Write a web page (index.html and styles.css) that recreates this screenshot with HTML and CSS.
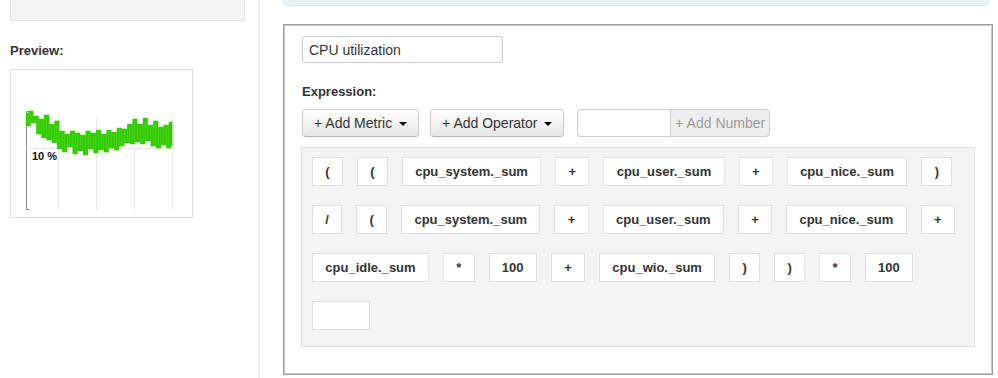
FILE: index.html
```html
<!DOCTYPE html>
<html lang="en">
<head>
    <meta charset="UTF-8">
    <meta name="viewport" content="width=device-width, initial-scale=1.0">
    <title>Composite metric</title>
    <link rel="stylesheet" href="styles.css">
</head>
<body>
    <div class="page">
        <aside class="sidebar">
            <div class="well"></div>
            <h4 class="label preview-label">Preview:</h4>
            <div class="preview">
                <svg width="181" height="147" viewBox="0 0 181 147">
                    <g stroke="#d0d0d0" stroke-width="1" stroke-dasharray="1 1">
                        <line x1="47.5" y1="46" x2="47.5" y2="139"/>
                        <line x1="85.5" y1="46" x2="85.5" y2="139"/>
                        <line x1="123.5" y1="46" x2="123.5" y2="139"/>
                        <line x1="161.5" y1="46" x2="161.5" y2="139"/>
                        <line x1="15" y1="78.5" x2="164" y2="78.5"/>
                    </g>
                    <path d="M17.5 41.5 H15.5 V139.5 H18.5" fill="none" stroke="#8a8a8a" stroke-width="1"/>
                    <path d="M16 43 V55 H18.6 V42 H21.2 V52 H23.8 V47 H26.4 V63 H29 V50 H31.6 V67 H34.2 V46 H36.8 V69 H39.4 V55 H42 V72 H44.6 V52 H47.2 V78 H49.8 V62 H52.4 V81 H55 V65 H57.6 V76 H60.2 V62 H62.8 V83 H65.4 V64 H68 V80 H70.6 V66 H73.2 V84 H75.8 V62 H78.4 V78 H81 V64 H83.6 V82 H86.2 V61 H88.8 V79 H91.4 V65 H94 V81 H96.6 V61 H99.2 V77 H101.8 V63 H104.4 V79 H107 V59 H109.6 V75 H112.2 V60 H114.8 V72 H117.4 V55 H120 V73 H122.6 V50 H125.2 V71 H127.8 V55 H130.4 V73 H133 V49 H135.6 V70 H138.2 V56 H140.8 V75 H143.4 V52 H146 V77 H148.6 V58 H151.2 V74 H153.8 V56 H156.4 V77 H159 V53 H160 V76" fill="none" stroke="#33cc00" stroke-width="2.5"/>
                    <text x="21" y="90" class="chart-label">10 %</text>
                </svg>
            </div>
        </aside>
        <main class="content">
            <div class="alert"></div>
            <div class="panel">
                <input class="name-input" type="text" value="CPU utilization">
                <h4 class="label">Expression:</h4>
                <div class="toolbar">
                    <button class="btn">+ Add Metric <span class="caret"></span></button>
                    <button class="btn">+ Add Operator <span class="caret"></span></button>
                    <div class="input-group">
                        <input class="number-input" type="text">
                        <span class="addon">+ Add Number</span>
                    </div>
                </div>
                <div class="expression">
                    <span class="token">(</span>
                    <span class="token">(</span>
                    <span class="token">cpu_system._sum</span>
                    <span class="token">+</span>
                    <span class="token">cpu_user._sum</span>
                    <span class="token">+</span>
                    <span class="token">cpu_nice._sum</span>
                    <span class="token">)</span>
                    <span class="token">/</span>
                    <span class="token">(</span>
                    <span class="token">cpu_system._sum</span>
                    <span class="token">+</span>
                    <span class="token">cpu_user._sum</span>
                    <span class="token">+</span>
                    <span class="token">cpu_nice._sum</span>
                    <span class="token">+</span>
                    <span class="token">cpu_idle._sum</span>
                    <span class="token">*</span>
                    <span class="token">100</span>
                    <span class="token">+</span>
                    <span class="token">cpu_wio._sum</span>
                    <span class="token">)</span>
                    <span class="token">)</span>
                    <span class="token">*</span>
                    <span class="token">100</span>
                    <span class="token token-empty"></span>
                </div>
            </div>
        </main>
    </div>
</body>
</html>
```

FILE: styles.css
```css
body { margin: 0; font-family: "Liberation Sans", Arial, sans-serif; color: #333; background: #fff; overflow: hidden; }
.page { display: flex; height: 378px; }

.sidebar { width: 248px; padding-left: 10px; border-right: 2px solid #eee; flex-shrink: 0; }
.well { width: 233px; height: 20px; background: #f4f4f4; border: 1px solid #e3e3e3; border-top: 0; }
.label { margin: 0; font-size: 13px; font-weight: bold; color: #333; line-height: 16px; }
.preview-label { margin-top: 22px; }
.preview { width: 181px; height: 147px; margin-top: 10px; border: 1px solid #dcdcdc; }
.preview svg { display: block; }
.chart-label { font-family: "Liberation Sans", Arial, sans-serif; font-size: 11px; font-weight: bold; fill: #111; }

.content { padding-left: 23px; }
.alert { width: 704px; height: 5px; background: #e8f1f6; border: 1px solid #d5e5ee; border-top: 0; border-radius: 0 0 4px 4px; }
.panel { width: 674px; margin-top: 18px; padding: 11px 17px 27px 17px; border: 1px solid #999; box-shadow: inset 1px 1px 0 #c8c8c8, inset -1px -1px 0 #c8c8c8; }

.name-input { display: block; width: 201px; height: 27px; box-sizing: border-box; margin-left: 1px; padding: 0 6px; font-family: inherit; font-size: 14px; color: #333; border: 1px solid #ccc; border-radius: 3px; }
.panel .label { margin-top: 21px; margin-left: 1px; }

.toolbar { display: flex; align-items: center; margin-top: 9px; margin-left: 1px; }
.btn { height: 28px; padding: 0 11px; margin-right: 11px; font-family: inherit; font-size: 14px; color: #333; background: linear-gradient(#fff, #e6e6e6); border: 1px solid #ccc; border-bottom-color: #b5b5b5; border-radius: 4px; box-shadow: 0 1px 2px rgba(0,0,0,.05); white-space: nowrap; }
.caret { display: inline-block; width: 0; height: 0; margin-left: 3px; vertical-align: middle; border-top: 4px solid #000; border-left: 4px solid transparent; border-right: 4px solid transparent; }
.input-group { display: flex; margin-left: 2px; }
.number-input { width: 93px; height: 28px; box-sizing: border-box; padding: 0 6px; border: 1px solid #ccc; border-right: 0; border-radius: 4px 0 0 4px; font-size: 14px; }
.addon { display: flex; align-items: center; height: 28px; box-sizing: border-box; padding: 0 4px; font-size: 14px; color: #999; background: #eee; border: 1px solid #ccc; border-radius: 0 4px 4px 0; white-space: nowrap; }

.expression { display: flex; flex-wrap: wrap; gap: 19px 14px; margin-top: 10px; padding: 9px 10px 16px 10px; background: #f3f3f3; border: 1px solid #e0e0e0; }
.token { display: flex; align-items: center; justify-content: center; height: 29px; box-sizing: border-box; padding: 0 12.3px; font-size: 13px; font-weight: bold; color: #333; background: #fff; border: 1px solid #ddd; }
.token-empty { width: 58px; }
```
